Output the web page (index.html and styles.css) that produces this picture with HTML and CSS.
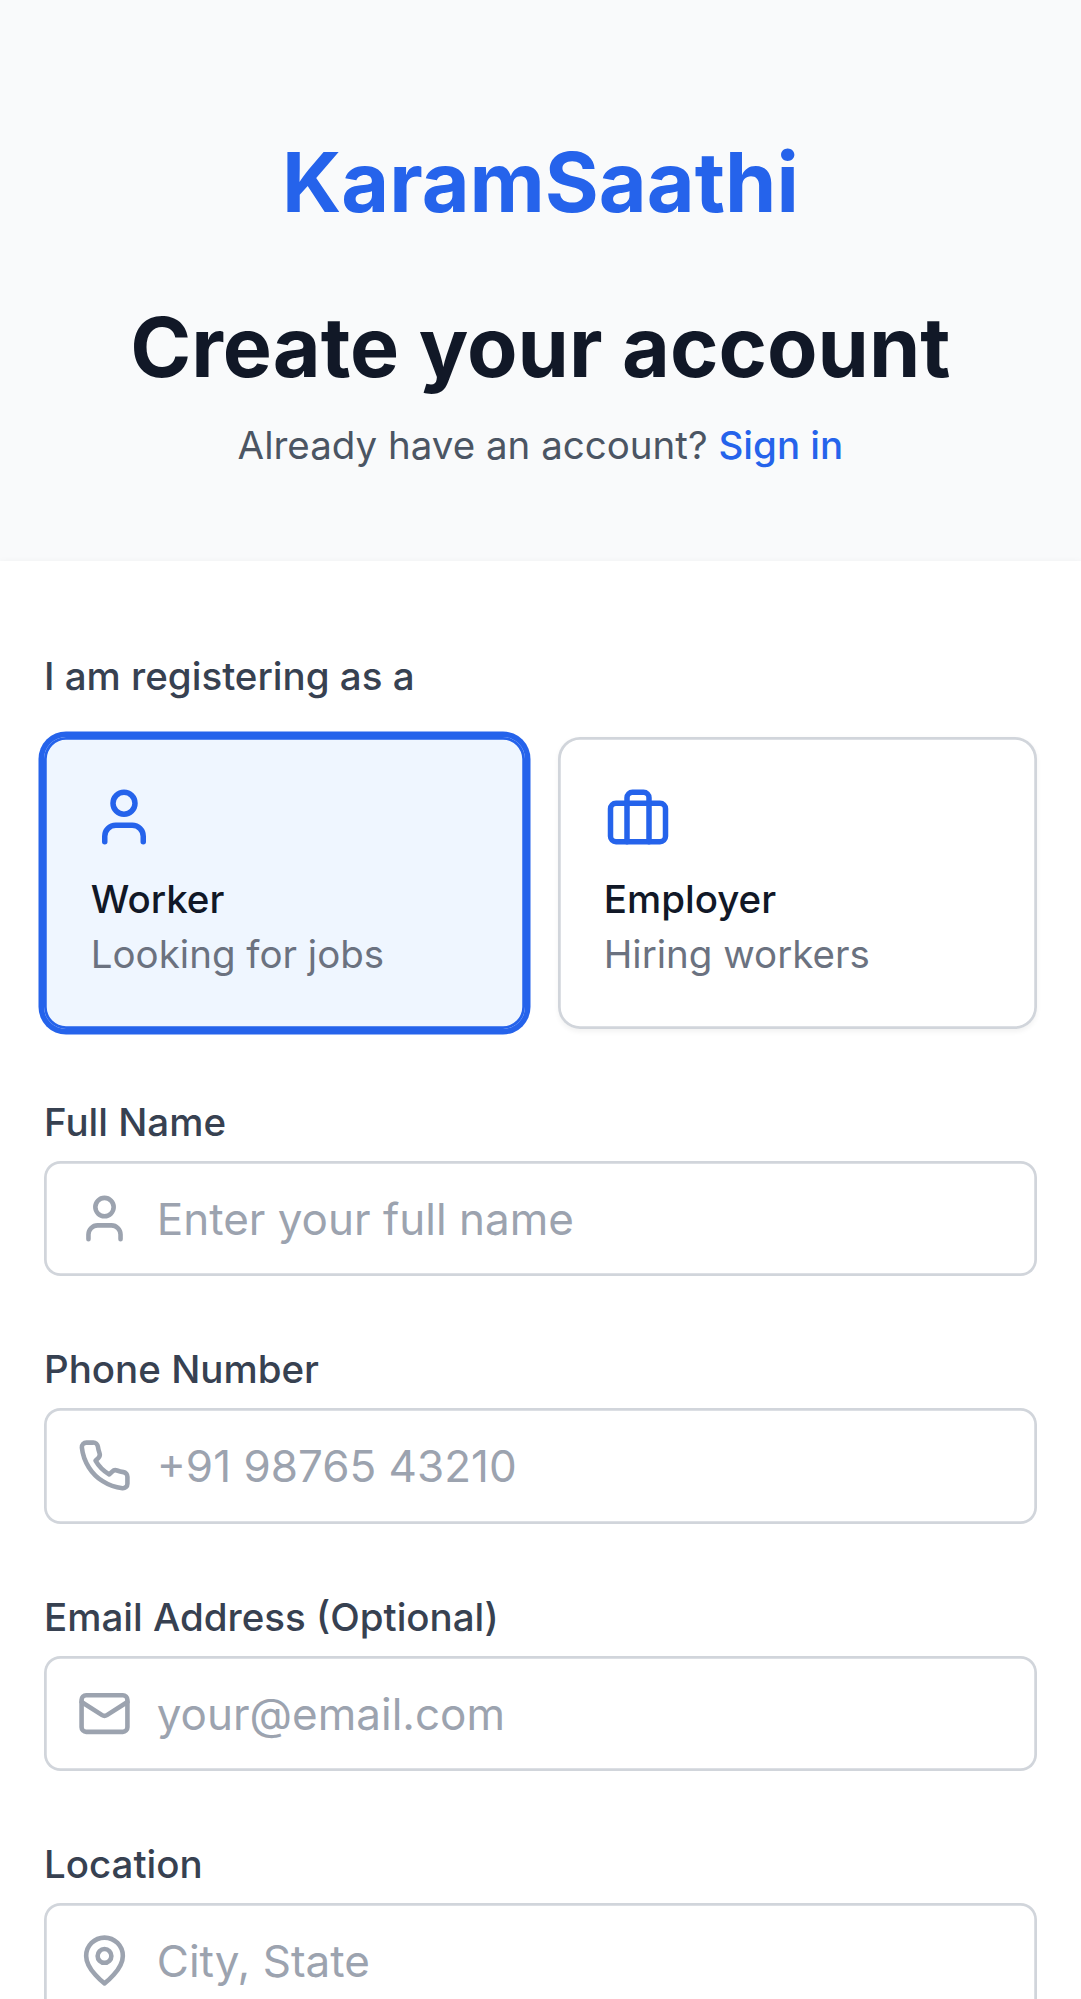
FILE: index.html
```html
<!DOCTYPE html>
<html lang="en">
<head>
<meta charset="utf-8">
<meta name="viewport" content="width=device-width, initial-scale=1">
<title>KaramSaathi - Create your account</title>
<link rel="stylesheet" href="styles.css">
</head>
<body>
<main class="page">
  <header class="intro">
    <h1 class="brand">KaramSaathi</h1>
    <h2 class="title">Create your account</h2>
    <p class="signin">Already have an account? <a class="signin-link" href="#">Sign in</a></p>
  </header>

  <form class="panel">
    <div class="roles">
      <span class="label">I am registering as a</span>
      <div class="role-grid">
        <div class="role role-selected">
          <svg class="icon role-icon" viewBox="0 0 24 24"><path d="M19 21v-2a4 4 0 0 0-4-4H9a4 4 0 0 0-4 4v2"/><circle cx="12" cy="7" r="4"/></svg>
          <span class="role-name">Worker</span>
          <span class="role-note">Looking for jobs</span>
        </div>
        <div class="role">
          <svg class="icon role-icon role-icon-case" viewBox="0 0 24 24"><rect width="20" height="14" x="2" y="7" rx="2"/><path d="M16 21V5a2 2 0 0 0-2-2h-4a2 2 0 0 0-2 2v16"/></svg>
          <span class="role-name">Employer</span>
          <span class="role-note">Hiring workers</span>
        </div>
      </div>
    </div>

    <div class="field">
      <label class="label" for="name">Full Name</label>
      <div class="control">
        <svg class="icon field-icon" viewBox="0 0 24 24"><path d="M19 21v-2a4 4 0 0 0-4-4H9a4 4 0 0 0-4 4v2"/><circle cx="12" cy="7" r="4"/></svg>
        <input class="input" id="name" type="text" placeholder="Enter your full name">
      </div>
    </div>

    <div class="field">
      <label class="label" for="phone">Phone Number</label>
      <div class="control">
        <svg class="icon field-icon" viewBox="0 0 24 24"><path d="M22 16.92v3a2 2 0 0 1-2.18 2 19.79 19.79 0 0 1-8.63-3.07 19.5 19.5 0 0 1-6-6 19.79 19.79 0 0 1-3.07-8.67A2 2 0 0 1 4.11 2h3a2 2 0 0 1 2 1.72 12.84 12.84 0 0 0 .7 2.81 2 2 0 0 1-.45 2.11L8.09 9.91a16 16 0 0 0 6 6l1.27-1.27a2 2 0 0 1 2.11-.45 12.84 12.84 0 0 0 2.81.7A2 2 0 0 1 22 16.92z"/></svg>
        <input class="input" id="phone" type="tel" placeholder="+91 98765 43210">
      </div>
    </div>

    <div class="field">
      <label class="label" for="email">Email Address (Optional)</label>
      <div class="control">
        <svg class="icon field-icon" viewBox="0 0 24 24"><rect width="20" height="16" x="2" y="4" rx="2"/><path d="m22 7-8.97 5.7a1.94 1.94 0 0 1-2.06 0L2 7"/></svg>
        <input class="input" id="email" type="email" placeholder="your@email.com">
      </div>
    </div>

    <div class="field">
      <label class="label" for="location">Location</label>
      <div class="control">
        <svg class="icon field-icon" viewBox="0 0 24 24"><path d="M20 10c0 6-8 12-8 12s-8-6-8-12a8 8 0 0 1 16 0Z"/><circle cx="12" cy="10" r="3"/></svg>
        <input class="input" id="location" type="text" placeholder="City, State">
      </div>
    </div>
  </form>
</main>
</body>
</html>
```

FILE: styles.css
```css
* {
  box-sizing: border-box;
  margin: 0;
  padding: 0;
}

body {
  height: 1999px;
  overflow: hidden;
  background: #f9fafb;
  color: #111827;
  font-family: Inter, "Liberation Sans", sans-serif;
}

.page {
  display: flex;
  flex-direction: column;
  gap: 88px;
  width: 1080.75px;
  padding-top: 133px;
}

.intro {
  text-align: center;
}

.brand,
.title {
  font-size: 82.5px;
  line-height: 99px;
  font-weight: 700;
}

.brand {
  color: #2563eb;
}

.title {
  margin-top: 66px;
}

.signin {
  margin-top: 21px;
  font-size: 38.5px;
  line-height: 55px;
  color: #4b5563;
}

.signin-link {
  font-weight: 500;
  color: #2563eb;
  text-decoration: none;
}

.panel {
  display: flex;
  flex-direction: column;
  gap: 66px;
  padding: 88px 44px;
  background: #fff;
  box-shadow: 0 2.75px 8.25px rgba(0, 0, 0, 0.1), 0 2.75px 5.5px -2.75px rgba(0, 0, 0, 0.1);
}

.label {
  display: block;
  font-size: 38.5px;
  line-height: 55px;
  font-weight: 500;
  color: #374151;
}

.role-grid {
  display: grid;
  grid-template-columns: 481.25px 1fr;
  gap: 33px;
  margin-top: 33px;
}

.role {
  display: flex;
  flex-direction: column;
  padding: 46.75px 45.5px;
  border-radius: 22px;
  background: #fff;
  box-shadow: inset 0 0 0 2.75px #d1d5db, 0 2.75px 5.5px rgba(0, 0, 0, 0.05);
  font-size: 38.5px;
  line-height: 55px;
}

.role-selected {
  padding-left: 46.75px;
  background: #eff6ff;
  box-shadow: inset 0 0 0 2.75px #2563eb, 0 0 0 5.5px #2563eb;
}

.icon {
  fill: none;
  stroke: currentColor;
  stroke-width: 2;
  stroke-linecap: round;
  stroke-linejoin: round;
}

.role-icon {
  width: 66px;
  height: 66px;
  margin-bottom: 22px;
  color: #2563eb;
}

.role-icon-case {
  margin-left: 1.25px;
}

.role-name {
  font-weight: 500;
}

.role-note {
  color: #6b7280;
}

.control {
  display: flex;
  align-items: center;
  gap: 24.75px;
  height: 115.5px;
  margin-top: 11px;
  padding: 0 33px;
  border-radius: 16.5px;
  background: #fff;
  box-shadow: inset 0 0 0 2.75px #d1d5db;
}

.field-icon {
  flex: none;
  width: 55px;
  height: 55px;
  color: #9ca3af;
}

.input {
  flex: 1;
  min-width: 0;
  height: 66px;
  margin-top: 1px;
  border: 0;
  outline: 0;
  background: transparent;
  font: 400 44px/66px Inter, "Liberation Sans", sans-serif;
}

.input::placeholder {
  color: #9ca3af;
  opacity: 1;
}
```
